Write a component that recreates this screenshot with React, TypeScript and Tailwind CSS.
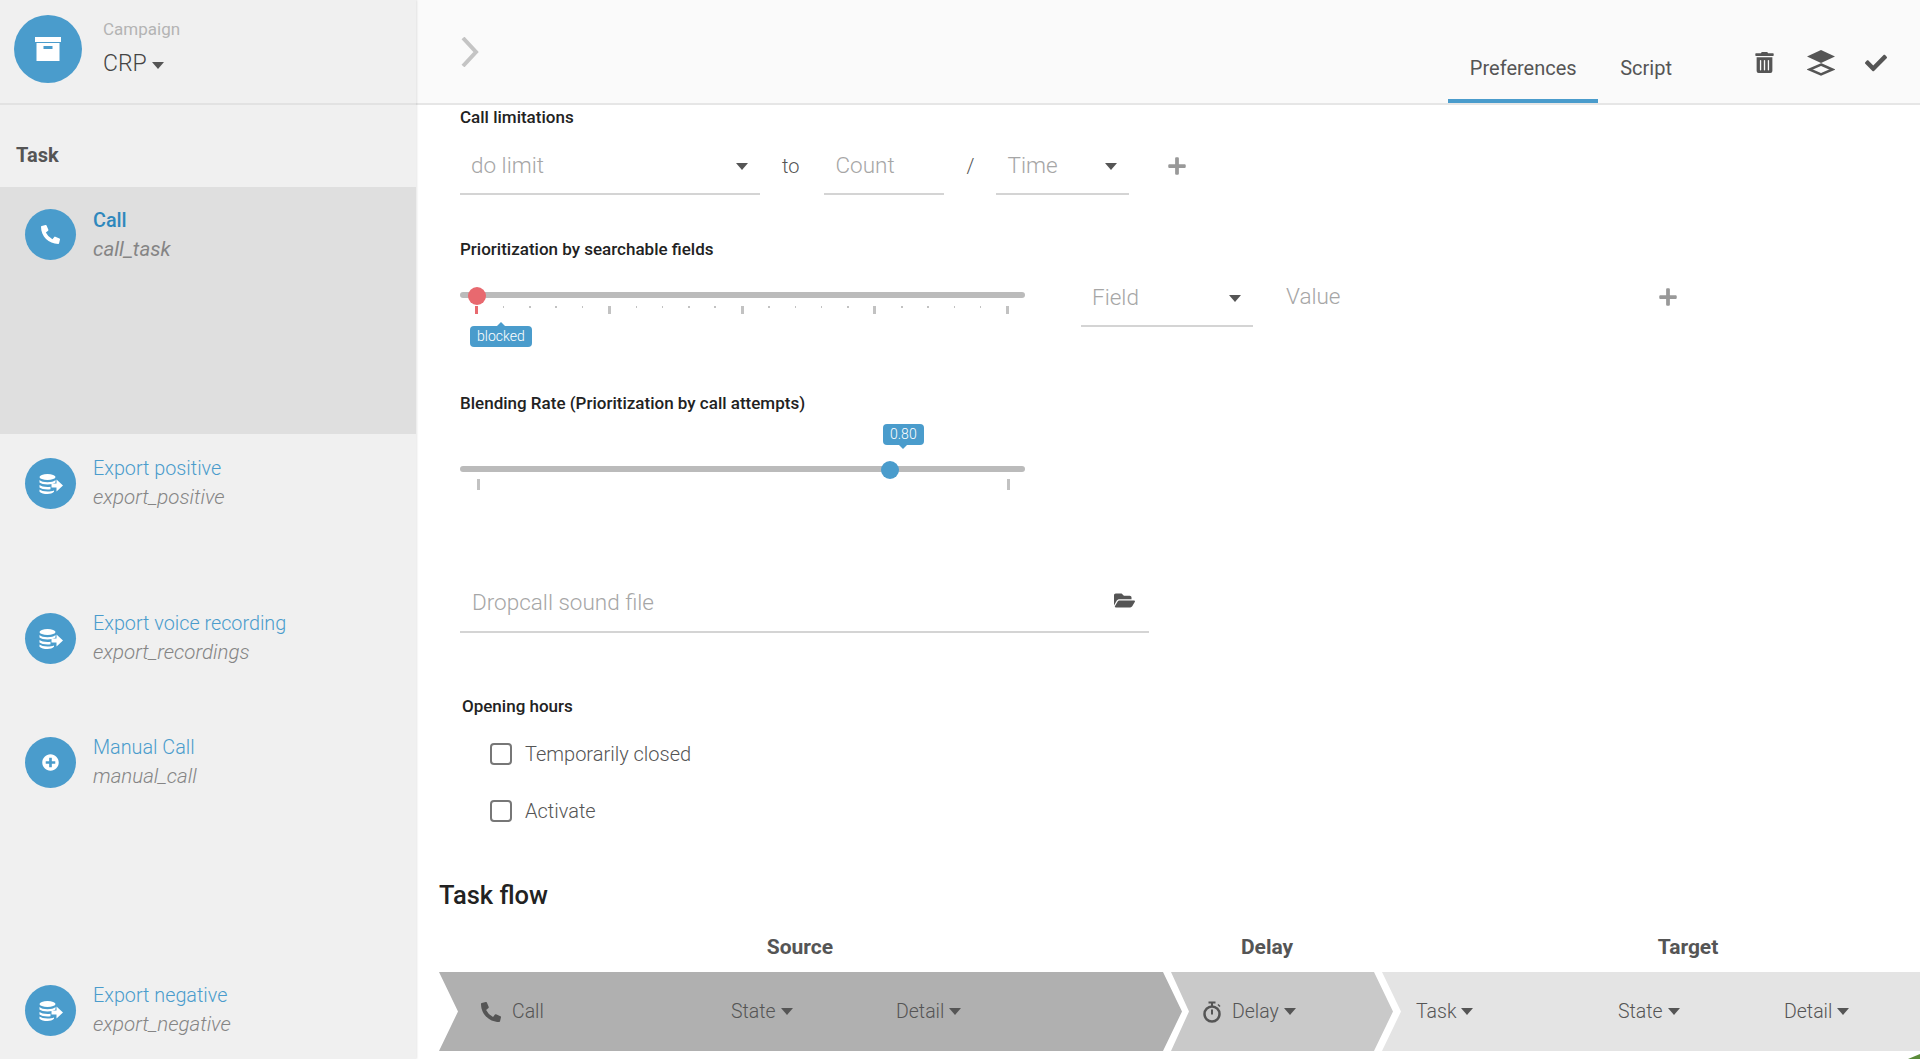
import { FaCheck, FaFolderOpen, FaPhoneAlt, FaPlus, FaPlusCircle, FaTrashAlt } from "react-icons/fa";
import { FC, ReactNode } from "react";

const Caret: FC<{ className?: string }> = ({ className = "" }) => (
  <span className={`inline-block h-0 w-0 border-x-[6px] border-t-[7px] border-x-transparent border-t-[#555] ${className}`} />
);

const ArchiveIcon = () => (
  <svg width="26" height="24" viewBox="0 0 26 24">
    <rect x="0" y="0" width="26" height="5" fill="#fff" />
    <rect x="1.5" y="6" width="23" height="18" fill="#fff" />
    <rect x="8.5" y="9" width="9" height="3" fill="#4a9ccc" />
  </svg>
);

const DbExportIcon = () => (
  <svg width="24" height="20" viewBox="0 0 24 20" fill="#fff">
    <ellipse cx="8.5" cy="3" rx="8" ry="3" />
    <path d="M.5 6c1.500 1.500 4.500 2.200 8 2.200s6.500-.7 8-2.200v2.500c-1.500 1.300-4.500 1.900-8 1.900s-6.500-.6-8-1.900z" />
    <path d="M.5 11c1.500 1.300 4.500 1.900 8 1.900 1 0 2-.05 3-.2v2.500c-1 .15-2 .2-3 .2-3.500 0-6.500-.6-8-1.900z" />
    <path d="M.5 15.500c1.500 1.300 4.500 1.900 8 1.900 2.500 0 5-.3 6.500-1v1.400c-1.500 1.400-4 2.200-6.500 2.200-3.500 0-6.500-.9-8-2.300z" />
    <path d="M12.500 9.500h5V5.500l6.500 6-6.500 6v-4h-5z" />
  </svg>
);

const LayersIcon = () => (
  <svg width="28" height="26" viewBox="0 0 28 26">
    <polygon points="14,0 28,6.500 14,13 0,6.500" fill="#555" />
    <polygon points="14,14.500 25.500,19.500 14,24.500 2.500,19.500" fill="none" stroke="#555" strokeWidth="2.500" />
  </svg>
);

const StopwatchIcon = () => (
  <svg width="18" height="22" viewBox="0 0 18 22" fill="none" stroke="#555">
    <circle cx="9" cy="13" r="7.500" strokeWidth="2.500" />
    <path d="M5.500 1.500h7M9 1.500v4" strokeWidth="2" />
    <path d="M15 3.500l2 2" strokeWidth="1.500" />
    <path d="M9 8.500v5" strokeWidth="2" />
  </svg>
);

const TaskRow: FC<{
  icon: ReactNode;
  title: string;
  name: string;
  active?: boolean;
  className: string;
}> = ({ icon, title, name, active, className }) => (
  <div className={`flex items-start gap-[17px] pl-[25px] ${active ? "bg-[#dfdfdf]" : ""} ${className}`}>
    <div className="flex h-[51px] w-[51px] shrink-0 items-center justify-center rounded-full bg-[#4a9ccc] text-white">
      {icon}
    </div>
    <div className={active ? "-mt-[2px]" : "-mt-[3px]"}>
      <div className={`text-[19.8px] leading-[28px] ${active ? "font-medium text-[#2f88bd]" : "font-light text-[#4a9ccc]"}`}>
        {title}
      </div>
      <div className={`text-[20.5px] italic leading-[28px] text-[#858585] ${active ? "font-normal" : "font-light"}`}>
        {name}
      </div>
    </div>
  </div>
);

const Sidebar = () => (
  <aside className="z-10 w-[416px] shrink-0 bg-[#f0f0f0] shadow-[1px_0_2px_rgba(0,0,0,0.1)]">
    <div className="flex h-[105px] items-start border-b-2 border-[#e2e2e2] pl-[14px] pt-[15px]">
      <div className="flex h-[68px] w-[68px] items-center justify-center rounded-full bg-[#4a9ccc]">
        <ArchiveIcon />
      </div>
      <div className="ml-[21px]">
        <div className="mt-[4px] text-[17px] leading-[20px] text-[#b4b4b4]">Campaign</div>
        <div className="mt-[10px] flex items-center gap-[5px] text-[23px] font-light leading-[30px] text-[#444]">
          CRP
          <Caret className="mt-[2px]" />
        </div>
      </div>
    </div>
    <div className="flex h-[82px] items-center pl-[16px] pt-[18px] text-[20px] font-bold text-[#555]">Task</div>
    <TaskRow active className="h-[247px] pt-[22px]" icon={<FaPhoneAlt size={19} />} title="Call" name="call_task" />
    <TaskRow className="h-[155px] pt-[24px]" icon={<DbExportIcon />} title="Export positive" name="export_positive" />
    <TaskRow className="h-[124px] pt-[24px]" icon={<DbExportIcon />} title="Export voice recording" name="export_recordings" />
    <TaskRow className="h-[248px] pt-[24px]" icon={<FaPlusCircle size={17} />} title="Manual Call" name="manual_call" />
    <TaskRow className="pt-[24px]" icon={<DbExportIcon />} title="Export negative" name="export_negative" />
  </aside>
);

const TopBar = () => (
  <header className="flex h-[105px] items-start border-b-2 border-[#e6e6e6] bg-[#fafafa]">
    <svg className="ml-[44px] mt-[37px]" width="20" height="30" viewBox="0 0 20 30">
      <polyline points="3,1 16,15 3,29" fill="none" stroke="#c4c4c4" strokeWidth="4" />
    </svg>
    <div className="ml-auto flex h-[103px]">
      <div className="flex h-full w-[150px] items-center justify-center border-b-4 border-[#4a9ccc] pt-[36px] text-[20px] text-[#555]">
        Preferences
      </div>
      <div className="ml-[22px] flex h-full items-center pt-[33px] text-[20px] text-[#555]">Script</div>
      <div className="ml-[82px] mr-[33px] flex items-start text-[#555]">
        <FaTrashAlt className="mt-[52px]" size={21} />
        <div className="ml-[32px] mt-[50px]">
          <LayersIcon />
        </div>
        <FaCheck className="ml-[30px] mt-[52px]" size={22} />
      </div>
    </div>
  </header>
);

const Label: FC<{ children: ReactNode; className?: string }> = ({ children, className = "" }) => (
  <div className={`text-[17px] font-medium leading-[20px] text-[#222] ${className}`}>{children}</div>
);

const FieldBox: FC<{ text: string; className: string; caret?: boolean }> = ({ text, className, caret }) => (
  <div className={`flex h-[58px] items-center justify-between border-b-2 border-[#d4d4d4] pl-[11px] pt-[1px] text-[22.5px] font-light text-[#a6a6a6] ${className}`}>
    {text}
    {caret && <Caret className="mr-[12px] mt-[2px]" />}
  </div>
);

const Tick: FC<{ major?: boolean; red?: boolean }> = ({ major, red }) => (
  <span className={`${major ? "h-[8px] w-[3px]" : "h-[2px] w-[1.500px]"} ${red ? "bg-[#e8696f]" : "bg-[#c2c2c2]"}`} />
);

const ticks = Array.from({ length: 21 }, (_, i) => i);

const SliderTrack: FC<{ thumbLeft: string; thumbColor: string; children: ReactNode }> = ({ thumbLeft, thumbColor, children }) => (
  <div className="relative w-[565px] pt-[6px]">
    <div className="h-[6px] rounded-full bg-[#bbb]" />
    <div className={`absolute top-[1px] h-[18px] w-[18px] rounded-full ${thumbLeft} ${thumbColor}`} />
    {children}
  </div>
);

const PriorityRow = () => (
  <div className="flex items-start">
    <div className="pt-[27px]">
      <SliderTrack thumbLeft="left-[8px]" thumbColor="bg-[#e8696f]">
        <div className="ml-[15px] mt-[8px] flex w-[534px] items-start justify-between">
          {ticks.map((i) => (
            <Tick key={i} major={i % 5 === 0} red={i === 0} />
          ))}
        </div>
        <div className="absolute left-[10px] top-[40px] rounded-[4px] bg-[#4a9ccc] px-[7px] text-[14px] font-light leading-[21px] text-white">
          <span className="absolute left-[27px] top-[-4px] h-0 w-0 border-x-[4px] border-b-[4px] border-x-transparent border-b-[#4a9ccc]" />
          blocked
        </div>
      </SliderTrack>
    </div>
    <FieldBox text="Field" caret className="ml-[56px] mt-[10px] w-[172px]" />
    <div className="ml-[33px] mt-[10px] flex h-[58px] w-[392px] items-center justify-between pb-[3px] text-[22.5px] font-light text-[#a6a6a6]">
      Value
      <FaPlus className="text-[#999]" size={20} />
    </div>
  </div>
);

const Checkbox: FC<{ label: string; className?: string }> = ({ label, className = "" }) => (
  <label className={`ml-[30px] flex items-center gap-[13px] text-[20px] font-light leading-[24px] text-[#555] ${className}`}>
    <span className="h-[22px] w-[22px] rounded-[4px] border-2 border-[#777]" />
    {label}
  </label>
);

const Form = () => (
  <div className="pl-[44px]">
    <Label className="pt-[2px]">Call limitations</Label>
    <div className="mt-[10px] flex items-center">
      <FieldBox text="do limit" caret className="w-[300px]" />
      <span className="ml-[22px] text-[20px] font-light text-[#555]">to</span>
      <FieldBox text="Count" className="ml-[25px] w-[120px]" />
      <span className="ml-[22px] w-[30px] text-[20px] font-light text-[#555]">/</span>
      <FieldBox text="Time" caret className="w-[133px]" />
      <FaPlus className="ml-[38px] text-[#999]" size={20} />
    </div>
    <Label className="mt-[44px]">Prioritization by searchable fields</Label>
    <PriorityRow />
    <Label className="mt-[66px]">Blending Rate (Prioritization by call attempts)</Label>
    <div className="pt-[47px]">
      <SliderTrack thumbLeft="left-[421px]" thumbColor="bg-[#4a9ccc]">
        <div className="ml-[17px] mt-[7px] flex w-[533px] justify-between">
          <span className="h-[11px] w-[3px] bg-[#c2c2c2]" />
          <span className="h-[11px] w-[3px] bg-[#c2c2c2]" />
        </div>
        <div className="absolute left-[423px] top-[-36px] rounded-[4px] bg-[#4a9ccc] px-[7px] text-[14px] font-light leading-[21px] text-white">
          0.80
          <span className="absolute bottom-[-4px] left-[16px] h-0 w-0 border-x-[4px] border-t-[4px] border-x-transparent border-t-[#4a9ccc]" />
        </div>
      </SliderTrack>
    </div>
    <div className="mt-[84px] flex h-[59px] w-[689px] items-center justify-between border-b-2 border-[#d4d4d4] pl-[12px] pr-[14px] text-[22.5px] font-light text-[#a6a6a6]">
      Dropcall sound file
      <FaFolderOpen className="mb-[4px] text-[#555]" size={21} />
    </div>
    <Label className="ml-[2px] mt-[63px]">Opening hours</Label>
    <Checkbox label="Temporarily closed" className="mt-[26px]" />
    <Checkbox label="Activate" className="mt-[33px]" />
  </div>
);

const FlowItem: FC<{ children: ReactNode; className: string }> = ({ children, className }) => (
  <span className={`flex items-center gap-[5px] ${className}`}>
    {children}
  </span>
);

const TaskFlow = () => (
  <div className="pl-[23px]">
    <h2 className="mt-[56px] text-[25.5px] font-medium leading-[32px] text-[#222]">Task flow</h2>
    <div className="mt-[24px] flex pl-[1px] text-[21px] font-bold leading-[24px] text-[#555]">
      <div className="w-[720px] shrink-0 text-center">Source</div>
      <div className="w-[214px] shrink-0 text-center">Delay</div>
      <div className="w-[628px] shrink-0 text-center">Target</div>
    </div>
    <div className="mt-[13px] flex h-[79px] text-[19.5px] font-light text-[#555]">
      <div className="flex w-[743px] shrink-0 items-center bg-[#b0b0b0] pl-[42px] [clip-path:polygon(0_0,724px_0,100%_50%,724px_100%,0_100%,19px_50%)]">
        <FaPhoneAlt className="text-[#555]" size={20} />
        <span className="ml-[11px] w-[219px]">Call</span>
        <FlowItem className="w-[165px]">State<Caret /></FlowItem>
        <FlowItem className="">Detail<Caret /></FlowItem>
      </div>
      <div className="-ml-[11px] flex w-[222px] shrink-0 items-center bg-[#c9c9c9] pl-[32px] [clip-path:polygon(0_0,203px_0,100%_50%,203px_100%,0_100%,18px_50%)]">
        <StopwatchIcon />
        <FlowItem className="ml-[11px]">Delay<Caret /></FlowItem>
      </div>
      <div className="-ml-[11px] flex min-w-0 flex-1 items-center bg-[#e4e4e4] pl-[34px] [clip-path:polygon(0_0,100%_0,100%_100%,0_100%,19px_50%)]">
        <FlowItem className="w-[202px]">Task<Caret /></FlowItem>
        <FlowItem className="w-[166px]">State<Caret /></FlowItem>
        <FlowItem className="">Detail<Caret /></FlowItem>
      </div>
    </div>
  </div>
);

export default function App() {
  return (
    <div className="relative flex h-[1059px] w-[1920px] overflow-hidden bg-white font-['Roboto','Liberation_Sans',sans-serif]">
      <Sidebar />
      <main className="min-w-0 flex-1">
        <TopBar />
        <Form />
        <TaskFlow />
      </main>
      <svg className="absolute bottom-0 right-0" width="12" height="5" viewBox="0 0 12 5">
        <polygon points="0,5 12,0 12,5" fill="#5b8c3a" />
      </svg>
    </div>
  );
}
